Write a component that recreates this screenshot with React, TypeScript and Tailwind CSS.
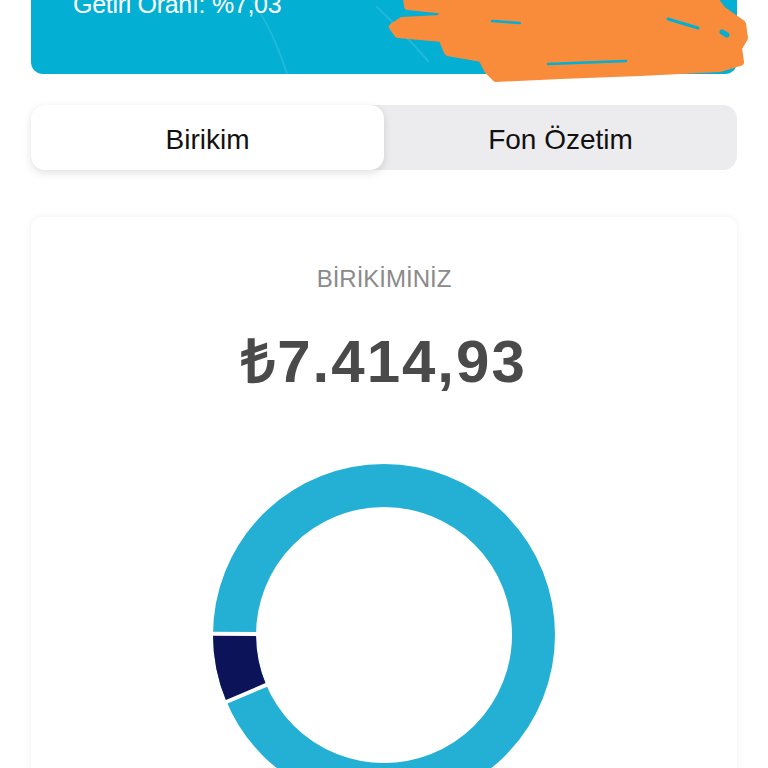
import React from "react";

const font = { fontFamily: '"Liberation Sans", Arial, sans-serif' };

function Scribble() {
  return (
    <svg
      className="absolute left-0 top-0 pointer-events-none"
      width="768"
      height="90"
      viewBox="0 0 768 90"
      fill="none"
    >
      <path
        d="M 407 -2 L 713 -2 L 722 10 L 742 24 L 744 38 L 738 48 L 740 62 L 720 68 L 640 72 L 560 75 L 496 78 L 488 70 L 482 58 L 448 52 L 442 38 L 398 34 L 393 27 L 402 21 L 440 19 L 446 10 L 408 6 Z"
        fill="#f98c3b"
        stroke="#f98c3b"
        strokeWidth="8"
        strokeLinejoin="round"
      />
      <g stroke="#03afd3" strokeLinecap="round">
        <path d="M 492 21 L 520 23" strokeWidth="2.5" />
        <path d="M 548 64 L 626 61" strokeWidth="2.5" />
        <path d="M 668 19 L 698 28" strokeWidth="3" />
        <path d="M 722 32 L 727 35" strokeWidth="5" />
      </g>
    </svg>
  );
}

function Donut() {
  const c = 172;
  const r = 149.5;
  const a1 = (157 * Math.PI) / 180;
  const x1 = c + r * Math.cos(a1);
  const y1 = c + r * Math.sin(a1);
  const g = (deg: number) => {
    const a = (deg * Math.PI) / 180;
    return {
      x1: c + 124 * Math.cos(a),
      y1: c + 124 * Math.sin(a),
      x2: c + 176 * Math.cos(a),
      y2: c + 176 * Math.sin(a),
    };
  };
  const gA = g(180.4);
  const gB = g(157);
  return (
    <svg width="344" height="344" viewBox="0 0 344 344">
      <circle cx={c} cy={c} r={r} fill="none" stroke="#23b0d4" strokeWidth="43" />
      <path
        d={`M ${x1} ${y1} A ${r} ${r} 0 0 1 ${c - r} ${c}`}
        fill="none"
        stroke="#0c1358"
        strokeWidth="43"
      />
      <line {...gA} stroke="#ffffff" strokeWidth="4" />
      <line {...gB} stroke="#ffffff" strokeWidth="4" />
    </svg>
  );
}

export default function App() {
  return (
    <div className="min-h-screen bg-white relative" style={font}>
      <div className="px-[31px]">
        <div className="relative h-[74px] rounded-b-[12px] bg-[#03afd3] overflow-hidden">
          <svg className="absolute left-0 top-0" width="706" height="74" viewBox="0 0 706 74" fill="none">
            <path d="M 218 -4 Q 242 28 258 80" stroke="#ffffff" strokeOpacity="0.12" strokeWidth="2" />
            <path d="M 345 6 Q 370 30 398 62" stroke="#ffffff" strokeOpacity="0.12" strokeWidth="2" />
          </svg>
          <div className="relative mt-[-11px] pl-[42px] text-[25px] leading-[30px] text-white tracking-[-0.3px]">
            Getiri Oranı: %7,03
          </div>
        </div>

        <div className="mt-[31px] grid grid-cols-2 h-[65px] rounded-[14px] bg-[#ececef]">
          <div className="flex items-center justify-center pt-[5px] rounded-[14px] bg-white shadow-[0_3px_8px_rgba(0,0,0,0.12)] text-[28px] text-[#111111]">
            Birikim
          </div>
          <div className="flex items-center justify-center pt-[5px] text-[28px] text-[#111111]">
            Fon Özetim
          </div>
        </div>

        <div className="mt-[47px] rounded-[10px] bg-white shadow-[0_0_6px_rgba(0,0,0,0.07)] pt-[48px] pb-[40px] flex flex-col items-center">
          <div className="text-[24px] leading-[28px] text-[#8a8a8a]">BİRİKİMİNİZ</div>
          <div className="mt-[39px] text-[60px] leading-[60px] font-bold text-[#4a4a4a] tracking-[2px]">
            ₺7.414,93
          </div>
          <div className="mt-[71px]">
            <Donut />
          </div>
        </div>
      </div>
      <Scribble />
    </div>
  );
}
